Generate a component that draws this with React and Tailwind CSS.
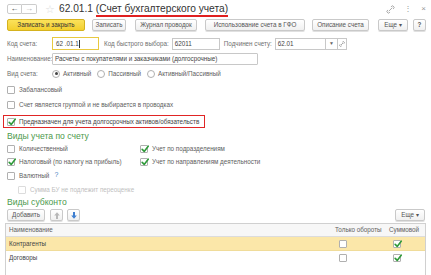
import React from "react";

const font = { fontFamily: '"Liberation Sans", Arial, sans-serif' };

function Btn({ children, className = "" }) {
  return (
    <div className={`h-[12px] flex items-center justify-center border border-[#c9c9c9] rounded-[2px] bg-gradient-to-b from-white to-[#f0f0f0] text-[6.3px] text-[#555] whitespace-nowrap shadow-[0_1px_0_#e0e0e0] ${className}`}>
      {children}
    </div>
  );
}

function Check({ checked, disabled }) {
  return (
    <div className={`relative w-[8px] h-[8px] border rounded-[1px] bg-white shrink-0 ${disabled ? "border-[#dcdcdc]" : "border-[#b0b0b0]"}`}>
      {checked && (
        <svg className="absolute left-0 -top-[1px] w-[8px] h-[8px]" viewBox="0 0 10 10">
          <path d="M1.5 5.5 L4 8 L9 1.5" fill="none" stroke="#2f9a3a" strokeWidth="2" strokeLinecap="round" strokeLinejoin="round" />
        </svg>
      )}
    </div>
  );
}

function CheckRow({ label, checked, disabled, className = "", extra }) {
  return (
    <div className={`flex items-center gap-[4px] text-[6.3px] whitespace-nowrap ${disabled ? "text-[#c0c0c0]" : "text-[#606060]"} ${className}`}>
      <Check checked={checked} disabled={disabled} />
      <span>{label}</span>
      {extra}
    </div>
  );
}

function Radio({ on, label }) {
  return (
    <div className="flex items-center gap-[3px] text-[6.3px] text-[#606060]">
      <div className="w-[8px] h-[8px] rounded-full border border-[#b0b0b0] bg-white flex items-center justify-center">
        {on && <div className="w-[3px] h-[3px] rounded-full bg-[#444]" />}
      </div>
      <span>{label}</span>
    </div>
  );
}

const linkPath = "M3 7 L7 3 M5.5 2 L7.5 0.8 L9.2 2.5 L8 4.5 M4.5 8 L2.5 9.2 L0.8 7.5 L2 5.5";

export default function App() {
  return (
    <div className="w-[431px] h-[275px] bg-white overflow-hidden relative" style={font}>
      {/* title */}
      <div className="h-[18px] flex items-center pl-[7px] pr-[5px]">
        <div className="flex">
          <div className="w-[15px] h-[10px] border border-[#ccc] rounded-l-[2px] flex items-center justify-center text-[8px] text-[#333] leading-none">←</div>
          <div className="w-[15px] h-[10px] border border-l-0 border-[#ccc] rounded-r-[2px] flex items-center justify-center text-[8px] text-[#aaa] leading-none">→</div>
        </div>
        <span className="ml-[8px] text-[11px] text-[#ddd] leading-none">☆</span>
        <div className="ml-[4px] text-[10.2px] text-[#333] leading-none whitespace-nowrap">
          62.01.1 <span className="border-b-[2px] border-[#e02020] pb-[1px]">(Счет бухгалтерского учета)</span>
        </div>
        <div className="ml-auto flex items-center gap-[9px] text-[#999]">
          <svg width="9" height="9" viewBox="0 0 10 10">
            <path d={linkPath} fill="none" stroke="#999" strokeWidth="0.9" />
          </svg>
          <span className="text-[8px] leading-none">⋮</span>
          <span className="text-[8px] leading-none">×</span>
        </div>
      </div>

      {/* toolbar */}
      <div className="flex items-center pl-[7px] mt-[1px] h-[12px]">
        <div className="h-[12px] w-[78px] flex items-center justify-center border border-[#d5b21e] rounded-[2px] bg-gradient-to-b from-[#fbe25a] to-[#f3cf2b] text-[6.3px] text-[#333] whitespace-nowrap">Записать и закрыть</div>
        <Btn className="ml-[7px] w-[34px]">Записать</Btn>
        <Btn className="ml-[9px] w-[62px]">Журнал проводок</Btn>
        <Btn className="ml-[8px] w-[100px]">Использование счета в ГФО</Btn>
        <Btn className="ml-[7px] w-[57px]">Описание счета</Btn>
        <Btn className="ml-[9px] w-[30px]">Еще ▾</Btn>
        <Btn className="ml-[5px] w-[13px] font-bold">?</Btn>
      </div>

      {/* code row */}
      <div className="flex items-center pl-[7px] mt-[6px] h-[13px] text-[6.3px] text-[#707070]">
        <span className="w-[45px]">Код счета:</span>
        <div className="w-[47px] h-[13px] border border-[#e8c940] flex items-center px-[3px] text-[#444]">62 .01.1<span className="w-px h-[8px] bg-[#333]" /></div>
        <span className="ml-[5px] whitespace-nowrap">Код быстрого выбора:</span>
        <div className="ml-[3px] w-[48px] h-[12px] border border-[#c8c8c8] flex items-center px-[2px] text-[#444]">62011</div>
        <span className="ml-[4px] whitespace-nowrap">Подчинен счету:</span>
        <div className="ml-[3px] w-[51px] h-[12px] border border-[#c8c8c8] flex items-center px-[2px] text-[#444]">62.01</div>
        <div className="w-[12px] h-[12px] border border-l-0 border-[#c8c8c8] flex items-center justify-center text-[5px] text-[#666]">▼</div>
        <div className="w-[9px] h-[12px] border border-l-0 border-[#c8c8c8] flex items-center justify-center">
          <svg width="6" height="6" viewBox="0 0 10 10"><path d={linkPath} fill="none" stroke="#888" strokeWidth="1.2" /></svg>
        </div>
      </div>

      {/* name row */}
      <div className="flex items-center pl-[7px] mt-[3px] h-[12px] text-[6.3px] text-[#707070]">
        <span className="w-[45px]">Наименование:</span>
        <div className="w-[206px] h-[12px] border border-[#c8c8c8] rounded-[1px] flex items-center px-[2px] text-[#444] whitespace-nowrap">Расчеты с покупателями и заказчиками (долгосрочные)</div>
      </div>

      {/* vid scheta */}
      <div className="flex items-center pl-[7px] mt-[3px] h-[11px] text-[6.3px] text-[#707070]">
        <span className="w-[45px]">Вид счета:</span>
        <div className="flex gap-[6px]">
          <Radio on label="Активный" />
          <Radio label="Пассивный" />
          <Radio label="Активный/Пассивный" />
        </div>
      </div>

      <CheckRow className="pl-[7px] mt-[5px] h-[11px]" label="Забалансовый" />
      <CheckRow className="pl-[7px] mt-[4px] h-[11px]" label="Счет является группой и не выбирается в проводках" />
      <div className="ml-[3px] mt-[5px] w-[202px] h-[13px] border-[1.5px] border-[#e02525] flex items-center pl-[3px]">
        <CheckRow checked label="Предназначен для учета долгосрочных активов/обязательств" className="!text-[#444]" />
      </div>

      <div className="pl-[7px] mt-[2px] text-[8.6px] text-[#4c9a4c] h-[12px] leading-[12px]">Виды учета по счету</div>

      <div className="grid grid-cols-[133px_1fr] pl-[7px] mt-[2px] gap-y-[2px]">
        <CheckRow className="h-[10px]" label="Количественный" />
        <CheckRow className="h-[10px]" checked label="Учет по подразделениям" />
        <CheckRow className="h-[11px]" checked label="Налоговый (по налогу на прибыль)" />
        <CheckRow className="h-[11px]" checked label="Учет по направлениям деятельности" />
      </div>
      <CheckRow className="pl-[7px] mt-[3px] h-[11px]" label="Валютный" extra={<span className="text-[#4a7fc0] text-[7px] ml-[1px]">?</span>} />
      <CheckRow className="pl-[18px] mt-[3px] h-[11px]" disabled label="Сумма БУ не подлежит переоценке" />

      <div className="pl-[7px] mt-[1px] text-[8.6px] text-[#4c9a4c] h-[12px] leading-[12px]">Виды субконто</div>

      <div className="flex items-center pl-[7px] pr-[6px] mt-[1px] h-[12px]">
        <Btn className="w-[38px]">Добавить</Btn>
        <Btn className="ml-[5px] w-[13px]">
          <svg width="6" height="7" viewBox="0 0 6 7"><path d="M2 7 H4 V3.5 H5.8 L3 0.2 L0.2 3.5 H2 Z" fill="#b8b8b8" /></svg>
        </Btn>
        <Btn className="ml-[4px] w-[13px]">
          <svg width="6" height="7" viewBox="0 0 6 7"><path d="M2 0 H4 V3.5 H5.8 L3 6.8 L0.2 3.5 H2 Z" fill="#3f7fd0" /></svg>
        </Btn>
        <Btn className="ml-auto w-[30px]">Еще ▾</Btn>
      </div>

      {/* table */}
      <div className="mx-[5px] mt-[2px] h-[54px] border border-[#d0d0d0] text-[6.3px] text-[#606060]">
        <div className="flex items-center h-[13px] border-b border-[#dcdcdc] bg-[#f7f7f7]">
          <span className="pl-[3px] flex-1">Наименование</span>
          <span className="w-[54px]">Только обороты</span>
          <span className="w-[36px]">Суммовой</span>
        </div>
        <div className="flex items-center h-[14px] bg-[#fbe7a9] border-b border-[#f0dc9a]">
          <span className="pl-[3px] flex-1 text-[#444]">Контрагенты</span>
          <div className="w-[54px] pl-[4px]"><Check /></div>
          <div className="w-[36px] pl-[4px]"><Check checked /></div>
        </div>
        <div className="flex items-center h-[14px]">
          <span className="pl-[3px] flex-1 text-[#444]">Договоры</span>
          <div className="w-[54px] pl-[4px]"><Check /></div>
          <div className="w-[36px] pl-[4px]"><Check checked /></div>
        </div>
      </div>
    </div>
  );
}
